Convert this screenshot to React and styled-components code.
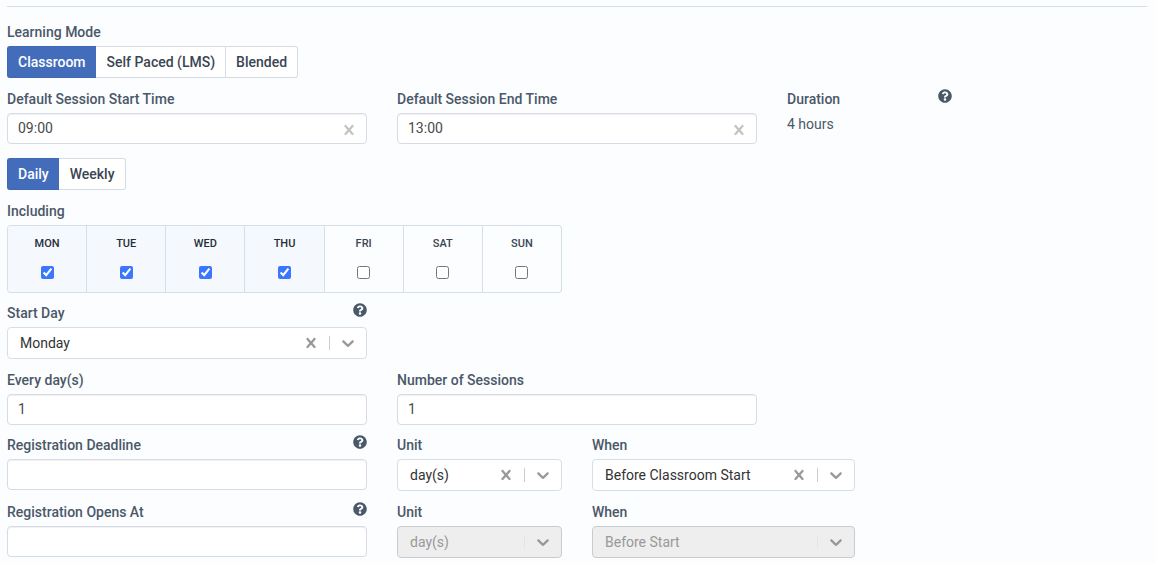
import { useState } from "react";
import styled, { createGlobalStyle } from "styled-components";
import { FaQuestionCircle } from "react-icons/fa";

const modes = ["Classroom", "Self Paced (LMS)", "Blended"]
const frequencies = ["Daily", "Weekly"]
const weekDays = ["Mon", "Tue", "Wed", "Thu", "Fri", "Sat", "Sun"]
const startDays = ["Monday", "Tuesday", "Wednesday", "Thursday", "Friday", "Saturday", "Sunday"]

export default function App() {
    const [mode, setMode] = useState("Classroom")
    const [frequency, setFrequency] = useState("Daily")
    const [days, setDays] = useState(["Mon", "Tue", "Wed", "Thu"])

    function toggleDay(day) {
        setDays(days.includes(day) ? days.filter((d) => d !== day) : [...days, day])
    }

    return (
        <>
            <GlobalStyle />
            <Page>
                <Divider />
                <Form onSubmit={(e) => e.preventDefault()}>
                    <div>
                        <Label as="span" id="mode-label">Learning Mode</Label>
                        <Toggle labelledBy="mode-label" options={modes} value={mode} onChange={setMode} />
                    </div>

                    <Row $spaced>
                        <TimeField id="start-time" label="Default Session Start Time" initial="09:00" />
                        <TimeField id="end-time" label="Default Session End Time" initial="13:00" />
                        <Column $span={2}>
                            <LabelRow>
                                <Label as="span">Duration</Label>
                                <Help />
                            </LabelRow>
                            <Duration>4 hours</Duration>
                        </Column>
                    </Row>

                    <Toggle label="Frequency" options={frequencies} value={frequency} onChange={setFrequency} />

                    <div>
                        <Label as="span" id="days-label">Including</Label>
                        <Days role="group" aria-labelledby="days-label">
                            {weekDays.map((day) => (
                                <Day key={day} $checked={days.includes(day)}>
                                    {day}
                                    <DayCheck
                                        type="checkbox"
                                        checked={days.includes(day)}
                                        onChange={() => toggleDay(day)}
                                    />
                                </Day>
                            ))}
                        </Days>
                    </div>

                    <Row>
                        <SelectField id="start-day" label="Start Day" options={startDays} span={4} help />
                    </Row>

                    <Row>
                        <TextField id="every" label="Every day(s)" initial="1" />
                        <TextField id="sessions" label="Number of Sessions" initial="1" />
                    </Row>

                    <Row>
                        <TextField id="deadline" label="Registration Deadline" initial="" help />
                        <SelectField id="deadline-unit" label="Unit" options={["day(s)", "week(s)"]} span={2} />
                        <SelectField id="deadline-when" label="When" options={["Before Classroom Start", "After Classroom Start"]} span={3} />
                    </Row>

                    <Row>
                        <TextField id="opens" label="Registration Opens At" initial="" help />
                        <SelectField id="opens-unit" label="Unit" options={["day(s)"]} span={2} disabled />
                        <SelectField id="opens-when" label="When" options={["Before Start"]} span={3} disabled />
                    </Row>
                </Form>
            </Page>
        </>
    )
}

function Toggle({ label, labelledBy, options, value, onChange }) {
    return (
        <ButtonGroup role="group" aria-label={label} aria-labelledby={labelledBy}>
            {options.map((option) => (
                <ToggleButton
                    key={option}
                    type="button"
                    aria-pressed={option === value}
                    $active={option === value}
                    onClick={() => onChange(option)}
                >
                    {option}
                </ToggleButton>
            ))}
        </ButtonGroup>
    )
}

function Help() {
    return (
        <HelpButton type="button" aria-label="Help">
            <FaQuestionCircle size={14} />
        </HelpButton>
    )
}

function TextField({ id, label, initial, help }) {
    const [value, setValue] = useState(initial)

    return (
        <Column $span={4}>
            <LabelRow>
                <Label htmlFor={id}>{label}</Label>
                {help && <Help />}
            </LabelRow>
            <InputBox>
                <Input id={id} type="text" value={value} onChange={(e) => setValue(e.target.value)} />
            </InputBox>
        </Column>
    )
}

function TimeField({ id, label, initial }) {
    const [value, setValue] = useState(initial)

    return (
        <Column $span={4}>
            <Label htmlFor={id}>{label}</Label>
            <InputBox>
                <Input id={id} type="text" value={value} onChange={(e) => setValue(e.target.value)} />
                <ClearTime type="button" aria-label="Clear time" onClick={() => setValue("")}>
                    <CrossIcon />
                </ClearTime>
            </InputBox>
        </Column>
    )
}

function SelectField({ id, label, options, span, help, disabled }) {
    const [value, setValue] = useState(options[0])

    return (
        <Column $span={span}>
            <LabelRow>
                <Label htmlFor={id}>{label}</Label>
                {help && <Help />}
            </LabelRow>
            <SelectBox $disabled={disabled}>
                <Select id={id} value={value} disabled={disabled} onChange={(e) => setValue(e.target.value)}>
                    <option value="" hidden></option>
                    {options.map((option) => <option key={option}>{option}</option>)}
                </Select>
                {!disabled && (
                    <IconButton type="button" aria-label="Clear" onClick={() => setValue("")}>
                        <CrossIcon />
                    </IconButton>
                )}
                <Separator $disabled={disabled} />
                <Arrow>
                    <ChevronIcon />
                </Arrow>
            </SelectBox>
        </Column>
    )
}

function CrossIcon() {
    return (
        <svg width="20" height="20" viewBox="0 0 20 20" fill="currentColor" aria-hidden="true">
            <path d="M14.348 14.849c-0.469 0.469-1.229 0.469-1.697 0l-2.651-3.030-2.651 3.029c-0.469 0.469-1.229 0.469-1.697 0-0.469-0.469-0.469-1.229 0-1.697l2.758-3.15-2.759-3.152c-0.469-0.469-0.469-1.228 0-1.697s1.228-0.469 1.697 0l2.652 3.031 2.651-3.031c0.469-0.469 1.228-0.469 1.697 0s0.469 1.229 0 1.697l-2.758 3.152 2.758 3.15c0.469 0.469 0.469 1.229 0 1.698z" />
        </svg>
    )
}

function ChevronIcon() {
    return (
        <svg width="20" height="20" viewBox="0 0 20 20" fill="currentColor" aria-hidden="true">
            <path d="M4.516 7.548c0.436-0.446 1.043-0.481 1.576 0l3.908 3.747 3.908-3.747c0.533-0.481 1.141-0.446 1.574 0 0.436 0.445 0.408 1.197 0 1.615-0.406 0.418-4.695 4.502-4.695 4.502-0.217 0.223-0.502 0.335-0.787 0.335s-0.57-0.112-0.789-0.335c0 0-4.287-4.084-4.695-4.502s-0.436-1.17 0-1.615z" />
        </svg>
    )
}

const GlobalStyle = createGlobalStyle`
* {
    box-sizing: border-box;
}
body {
    margin: 0;
    background-color: #FCFDFF;
    font-family: Roboto, "Liberation Sans", sans-serif;
    font-size: 14px;
    line-height: 20px;
    color: #4A5868;
}
button, input, select {
    font: inherit;
}
`

const Page = styled.main`
padding: 6px 9px 6px 7px;
`

const Divider = styled.hr`
margin: 0 0 15px;
border: 0;
border-top: 1px solid #D5DFE8;
`

const Form = styled.form`
display: flex;
flex-direction: column;
gap: 10px;
`

const Row = styled.div`
display: grid;
grid-template-columns: repeat(12, minmax(0, 1fr));
column-gap: 30px;
padding-bottom: ${(props) => props.$spaced ? "4px" : "0"};
`

const Column = styled.div`
grid-column: span ${(props) => props.$span};
`

const LabelRow = styled.div`
display: flex;
justify-content: space-between;
align-items: flex-start;
`

const Label = styled.label`
display: block;
margin-bottom: 4px;
font-weight: 500;
`

const HelpButton = styled.button`
display: flex;
padding: 0;
border: 0;
background: none;
color: #4A5868;
cursor: pointer;
`

const Duration = styled.div`
padding-top: 1px;
`

const ButtonGroup = styled.div`
display: flex;
margin-bottom: 1px;
`

const ToggleButton = styled.button`
height: 32px;
padding: 0 10px;
border: 1px solid ${(props) => props.$active ? "#3F68B5" : "#D5DCE6"};
background-color: ${(props) => props.$active ? "#436CBB" : "#FFFFFF"};
color: ${(props) => props.$active ? "#FFFFFF" : "#3A4552"};
font-weight: 500;
cursor: pointer;

&:first-child {
    border-radius: 3px 0 0 3px;
}
&:last-child {
    border-radius: 0 3px 3px 0;
}
&:not(:first-child) {
    border-left: 0;
}
&[aria-pressed="true"]:not(:last-child) {
    border-right: 0;
}
&[aria-pressed="true"] + & {
    padding-left: 11px;
}
`

const Days = styled.div`
display: flex;
max-width: 555px;
overflow: hidden;
border: 1px solid #D5DFE8;
border-left: 0;
border-radius: 4px;
`

const Day = styled.label`
display: flex;
flex: 1;
flex-direction: column;
align-items: center;
gap: 12px;
padding: 8px 0 13px;
border-left: 1px solid #D5DFE8;
background-color: ${(props) => props.$checked ? "#F5F9FD" : "transparent"};
color: ${(props) => props.$checked ? "#262E38" : "#3A4552"};
font-size: 11px;
font-weight: 500;
text-transform: uppercase;

&:first-child {
    border-radius: 3px 0 0 3px;
}
`

const DayCheck = styled.input`
width: 13px;
height: 13px;
margin: 0;
accent-color: #3B76FF;
`

const InputBox = styled.div`
display: flex;
align-items: center;
height: 31px;
border: 1px solid #D5DCE6;
border-radius: 4px;
background-color: #FFFFFF;
box-shadow: inset 0 1px 1px rgba(0, 0, 0, 0.06);
`

const Input = styled.input`
flex: 1;
min-width: 0;
height: 100%;
padding: 0 10px 2px;
border: 0;
outline: 0;
background: none;
color: #4A4A4A;
`

const IconButton = styled.button`
display: flex;
padding: 0 8px;
border: 0;
background: none;
color: #999999;
cursor: pointer;
`

const ClearTime = styled(IconButton)`
padding: 2px 7px 0;
color: #C4C4C4;
`

const SelectBox = styled.div`
display: flex;
align-items: center;
height: 32px;
margin-bottom: 1px;
border: 1px solid ${(props) => props.$disabled ? "#C9CCCF" : "#D5DFE8"};
border-radius: 4px;
background-color: ${(props) => props.$disabled ? "#EEEEEE" : "#FFFFFF"};
`

const Select = styled.select`
flex: 1;
min-width: 0;
height: 100%;
padding: 0 0 0 12px;
border: 0;
outline: 0;
appearance: none;
background: none;
color: #333333;

&:disabled {
    color: #999999;
    opacity: 1;
}
`

const Separator = styled.span`
width: 1px;
height: 14px;
background-color: ${(props) => props.$disabled ? "#E4E4E4" : "#CCCCCC"};
`

const Arrow = styled.span`
display: flex;
padding: 0 8px;
color: #999999;
pointer-events: none;
`
